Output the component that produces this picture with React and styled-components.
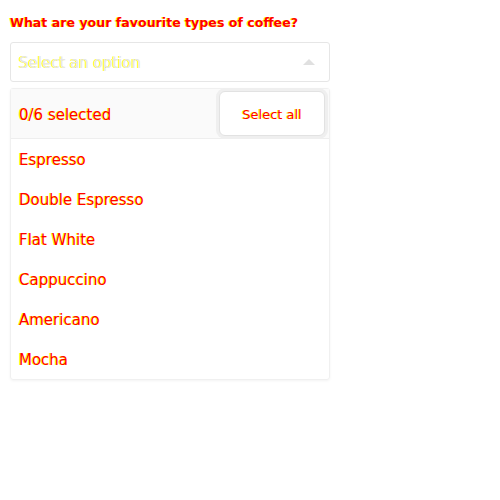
import React from "react";
import styled, { createGlobalStyle } from "styled-components";

const GlobalStyle = createGlobalStyle`
  body {
    margin: 0;
    background: #fff;
    font-family: "DejaVu Sans", "Liberation Sans", sans-serif;
  }
`;

const glitch = `
  color: #ff0000;
  text-shadow: -1px 0 #ffff00;
`;

const Wrapper = styled.div`
  width: 320px;
  padding: 13px 10px;
`;

const Label = styled.label`
  display: block;
  font-size: 12.6px;
  font-weight: 700;
  line-height: 20px;
  margin-bottom: 9px;
  ${glitch}
`;

const SelectBox = styled.div`
  height: 38px;
  border: 1px solid #e6e6e6;
  border-radius: 3px;
  display: flex;
  align-items: center;
  justify-content: space-between;
  padding: 0 14px 0 8px;
`;

const Placeholder = styled.span`
  font-size: 15px;
  padding-top: 2px;
  color: #e6e6e6;
  text-shadow: -1px 0 #ffff00;
`;

const Caret = styled.span`
  width: 0;
  height: 0;
  border-left: 6px solid transparent;
  border-right: 6px solid transparent;
  border-bottom: 6px solid #e0e0e0;
`;

const Panel = styled.div`
  margin-top: 6px;
  border: 1px solid #f0f0f0;
  border-radius: 3px;
  box-shadow: 0 1px 3px rgba(0, 0, 0, 0.05);
`;

const Header = styled.div`
  height: 49px;
  background: #fafafa;
  border-bottom: 1px solid #eee;
  display: flex;
  align-items: center;
  justify-content: space-between;
  padding: 0 4px 0 8px;
`;

const Count = styled.span`
  font-size: 15px;
  padding-top: 3px;
  ${glitch}
`;

const SelectAll = styled.button`
  width: 106px;
  height: 45px;
  border: 1px solid #e2e2e2;
  border-radius: 6px;
  background: #fff;
  box-shadow: 0 0 0 3px #efefef;
  font-family: inherit;
  font-size: 13px;
  padding-top: 3px;
  ${glitch}
`;

const Option = styled.div`
  height: 40px;
  display: flex;
  align-items: center;
  padding: 2px 8px 0;
  box-sizing: border-box;
  font-size: 15px;
  ${glitch}
`;

const options = ["Espresso", "Double Espresso", "Flat White", "Cappuccino", "Americano", "Mocha"];

const App = () => (
  <>
    <GlobalStyle />
    <Wrapper>
      <Label>What are your favourite types of coffee?</Label>
      <SelectBox>
        <Placeholder>Select an option</Placeholder>
        <Caret />
      </SelectBox>
      <Panel>
        <Header>
          <Count>0/6 selected</Count>
          <SelectAll>Select all</SelectAll>
        </Header>
        {options.map((o) => (
          <Option key={o}>{o}</Option>
        ))}
      </Panel>
    </Wrapper>
  </>
);

export default App;
